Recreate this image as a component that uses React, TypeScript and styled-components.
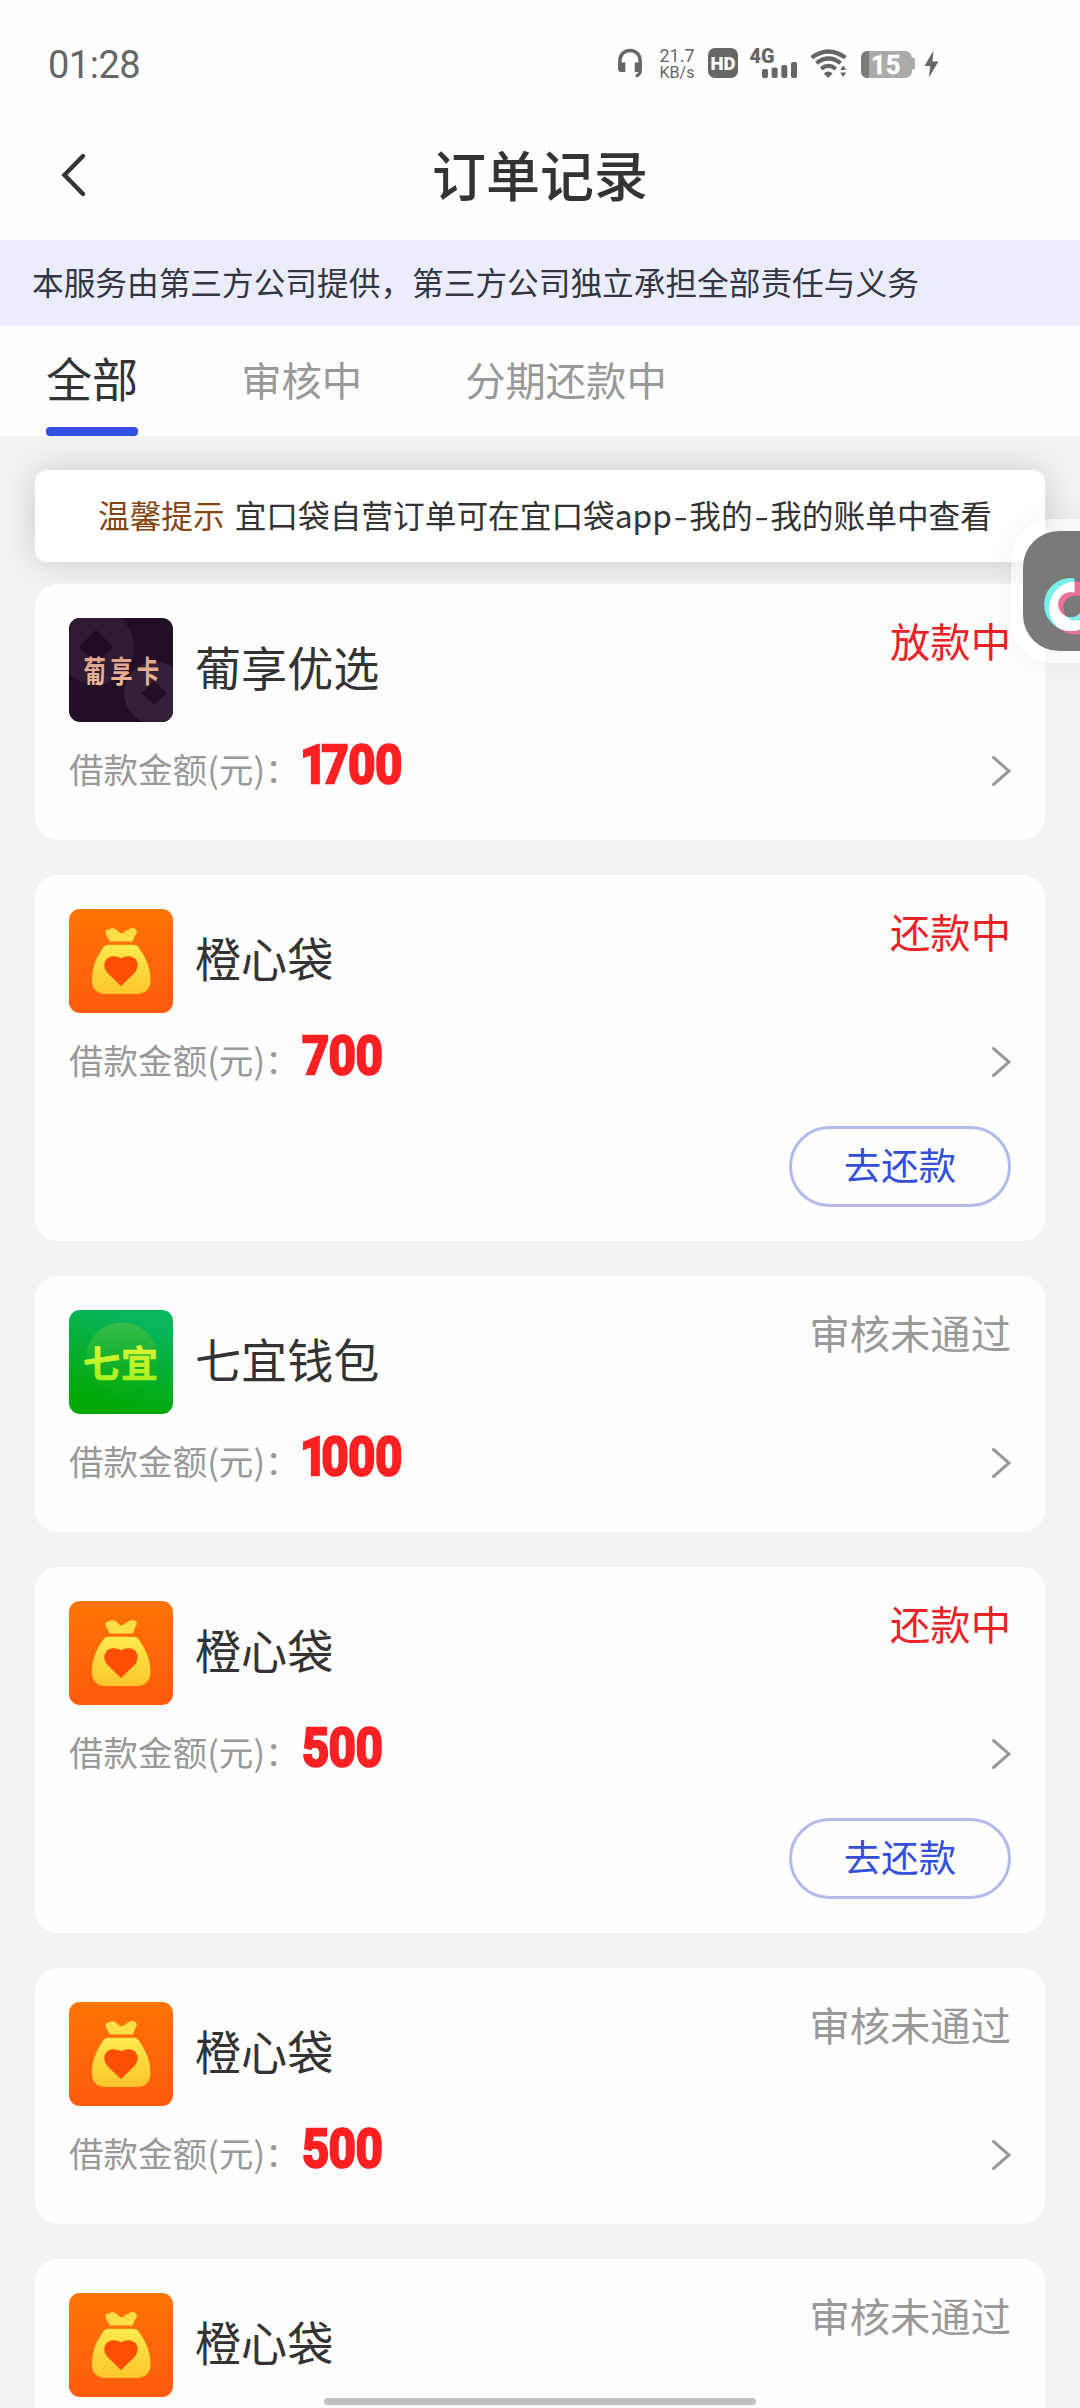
import React from "react";
import styled, { createGlobalStyle } from "styled-components";

const GlobalStyle = createGlobalStyle`
  *, *::before, *::after { box-sizing: border-box; }
  html, body { margin: 0; padding: 0; background: #f3f3f3; overflow: hidden; }
  body {
    font-family: "Noto Sans CJK SC", "Noto Sans", sans-serif;
    color: #333;
    -webkit-font-smoothing: antialiased;
  }
`;

const Screen = styled.div`
  position: relative;
  display: flex;
  flex-direction: column;
  width: 1080px;
  height: 2408px;
  overflow: hidden;
  background: #f3f3f3;
`;

const StatusBar = styled.div`
  flex: none;
  display: flex;
  align-items: center;
  height: 112px;
  padding: 14px 140px 0 48px;
  background: #fefefe;
`;

const Clock = styled.span`
  flex: 1;
  padding-top: 4px;
  font-family: Roboto, "Noto Sans", sans-serif;
  font-size: 38px;
  line-height: 44px;
  letter-spacing: -0.5px;
  color: #666;
`;

const StatusIcons = styled.svg`
  display: block;
  flex: none;
`;

const TitleBar = styled.header`
  flex: none;
  display: grid;
  grid-template-columns: 140px 1fr 140px;
  align-items: center;
  height: 128px;
  background: #fefefe;
`;

const BackButton = styled.button`
  display: flex;
  align-items: center;
  height: 100%;
  padding: 0 0 3px 58px;
  border: 0;
  background: none;
`;

const Title = styled.h1`
  margin: 0;
  padding-bottom: 4px;
  text-align: center;
  font-size: 54px;
  line-height: 80px;
  font-weight: 500;
  color: #333;
`;

const ServiceNotice = styled.div`
  flex: none;
  display: flex;
  align-items: center;
  height: 86px;
  padding: 0 31px 4px 32px;
  background: #ebedfd;
  font-size: 31.68px;
  line-height: 46px;
  color: #333642;
`;

const Tabs = styled.nav`
  flex: none;
  display: flex;
  gap: 103px;
  height: 110px;
  padding-left: 46px;
  background: #fefefe;
`;

const Tab = styled.div<{ $active?: boolean }>`
  display: flex;
  flex-direction: column;
  justify-content: space-between;
  font-size: ${(p) => (p.$active ? 46.08 : 40.32)}px;
  line-height: ${(p) => (p.$active ? 103 : 106)}px;
  color: ${(p) => (p.$active ? "#333" : "#999")};
  white-space: nowrap;
`;

const TabLabel = styled.span`
  height: 101px;
`;

const TabLine = styled.span`
  height: 9px;
  border-radius: 4px;
  background: #3450e4;
`;

const Content = styled.main`
  flex: 1;
  min-height: 0;
  padding: 34px 35px 0;
  overflow: hidden;
`;

const Tip = styled.div`
  display: flex;
  align-items: center;
  gap: 10px;
  height: 92px;
  padding: 0 0 4px 63px;
  border-radius: 12px;
  background: #fff;
  box-shadow: 0 0 34px rgba(0, 0, 0, 0.17);
  font-size: 31.68px;
  line-height: 46px;
  white-space: nowrap;
`;

const TipTag = styled.span`
  color: #844510;
`;

const Dash = styled.span`
  display: inline-block;
  width: 17.5px;
  text-align: center;
  transform: scaleX(1.3);
`;

const Orders = styled.div`
  position: relative;
  display: flex;
  flex-direction: column;
  gap: 35px;
  margin-top: 22px;
`;

const Card = styled.article`
  display: flex;
  flex-direction: column;
  padding: 34px;
  border-radius: 23px;
  background: #fefefe;
`;

const CardHead = styled.div`
  display: flex;
  height: 104px;
`;

const LogoBox = styled.svg`
  display: block;
  flex: none;
  width: 104px;
  height: 104px;
  border-radius: 11px;
`;

const Name = styled.h2`
  flex: 1;
  margin: 0 0 0 22px;
  font-size: 46.08px;
  font-weight: 400;
  line-height: 96px;
  color: #333;
`;

const Status = styled.span<{ $muted: boolean }>`
  height: 46px;
  font-size: 40.32px;
  line-height: 43px;
  color: ${(p) => (p.$muted ? "#999" : "#ec2227")};
`;

const AmountRow = styled.div`
  display: flex;
  align-items: center;
  height: 66px;
  margin: 14px 0 4px;
`;

const AmountLabel = styled.span`
  padding-bottom: 3px;
  font-size: 34.56px;
  line-height: 50px;
  color: #999;
`;

const Amount = styled.span`
  flex: 1;
  padding: 0 0 8px 2px;
`;

const AmountDigits = styled.span`
  display: inline-block;
  font-family: Roboto, "Noto Sans", sans-serif;
  font-size: 53.5px;
  line-height: 58px;
  font-weight: 700;
  color: #fd2023;
  -webkit-text-stroke: 2.6px #fd2023;
  transform: scaleX(0.88);
  transform-origin: left center;
`;

const Digit = styled.span<{ $narrow: boolean }>`
  margin-left: ${(p) => (p.$narrow ? -2 : 0)}px;
  letter-spacing: ${(p) => (p.$narrow ? -6.6 : -0.2)}px;
`;

const Chevron = styled.svg`
  display: block;
  flex: none;
  width: 20px;
  height: 32px;
  margin-top: 3px;
`;

const Actions = styled.div`
  display: flex;
  justify-content: flex-end;
  margin-top: 29px;
`;

const RepayButton = styled.button`
  width: 222px;
  height: 81px;
  padding: 0 0 6px;
  border: 3px solid #b2bbec;
  border-radius: 41px;
  background: transparent;
  font-family: inherit;
  font-size: 37.44px;
  line-height: 54px;
  color: #344fd8;
`;

const FloatingWindow = styled.div`
  position: absolute;
  top: 519px;
  right: -60px;
  display: flex;
  width: 129px;
  height: 144px;
  padding: 12px;
  border-radius: 42px;
  background: rgba(255, 255, 255, 0.55);
  box-shadow: 0 0 30px rgba(0, 0, 0, 0.05);
`;

const FloatingTile = styled.div`
  flex: 1;
  border-radius: 36px;
  overflow: hidden;
  background: rgba(100, 100, 100, 0.86);
`;

const HomeIndicator = styled.div`
  position: absolute;
  left: 324px;
  bottom: 3px;
  width: 432px;
  height: 7px;
  border-radius: 4px;
  background: #c0c0c0;
`;

type Brand = "puxiang" | "orange" | "qiyi";

interface Order {
  brand: Brand;
  name: string;
  amount: string;
  status: string;
  repay?: boolean;
}

const orders: Order[] = [
  { brand: "puxiang", name: "葡享优选", amount: "1700", status: "放款中" },
  { brand: "orange", name: "橙心袋", amount: "700", status: "还款中", repay: true },
  { brand: "qiyi", name: "七宜钱包", amount: "1000", status: "审核未通过" },
  { brand: "orange", name: "橙心袋", amount: "500", status: "还款中", repay: true },
  { brand: "orange", name: "橙心袋", amount: "500", status: "审核未通过" },
  { brand: "orange", name: "橙心袋", amount: "500", status: "审核未通过" },
];

function PuxiangLogo() {
  return (
    <LogoBox viewBox="0 0 104 104">
      <defs>
        <linearGradient id="px-text" x1="0" y1="0" x2="0" y2="1">
          <stop offset="0" stopColor="#d99c84" />
          <stop offset="1" stopColor="#efbd9f" />
        </linearGradient>
      </defs>
      <rect width="104" height="104" fill="#220f26" />
      <circle cx="27" cy="29" r="38" fill="#2f1b34" />
      <path d="M27 12 L44 29 L27 46 L10 29 Z" fill="#1f0c24" />
      <circle cx="86" cy="75" r="31" fill="#35203a" />
      <path d="M85 63 L98 75 L85 87 L72 75 Z" fill="#220f26" />
      <g transform="translate(14.5 0) scale(0.86 1.14)">
        <text
          x="0"
          y="56.5"
          fill="url(#px-text)"
          fontSize="26"
          fontWeight="700"
          letterSpacing="5"
          fontFamily="'Noto Sans CJK SC', sans-serif"
        >
          葡享卡
        </text>
      </g>
    </LogoBox>
  );
}

function QiyiLogo() {
  return (
    <LogoBox viewBox="0 0 104 104">
      <defs>
        <linearGradient id="qy-bg" x1="0.3" y1="0" x2="0" y2="1">
          <stop offset="0" stopColor="#08b45c" />
          <stop offset="0.75" stopColor="#02a90c" />
          <stop offset="1" stopColor="#02a902" />
        </linearGradient>
        <linearGradient id="qy-disc" x1="0" y1="0" x2="0" y2="1">
          <stop offset="0" stopColor="#38bd4c" />
          <stop offset="1" stopColor="#0aaa0c" stopOpacity="0.3" />
        </linearGradient>
        <linearGradient id="qy-text" x1="0" y1="0" x2="0" y2="1">
          <stop offset="0" stopColor="#f2f53a" />
          <stop offset="1" stopColor="#9bf01a" />
        </linearGradient>
      </defs>
      <rect width="104" height="104" fill="url(#qy-bg)" />
      <circle cx="53" cy="48.5" r="36" fill="url(#qy-disc)" />
      <text
        x="14"
        y="67.5"
        fill="url(#qy-text)"
        stroke="url(#qy-text)"
        strokeWidth="0.6"
        fontSize="37"
        fontWeight="700"
        letterSpacing="1"
        fontFamily="'Noto Sans CJK SC', sans-serif"
      >
        七宜
      </text>
    </LogoBox>
  );
}

function OrangeLogo() {
  return (
    <LogoBox viewBox="0 0 104 104">
      <defs>
        <linearGradient id="or-bg" x1="0" y1="0" x2="0" y2="1">
          <stop offset="0" stopColor="#ff7404" />
          <stop offset="1" stopColor="#ff5b0e" />
        </linearGradient>
        <linearGradient id="or-bag" x1="0" y1="0" x2="0" y2="1">
          <stop offset="0" stopColor="#ffea4c" />
          <stop offset="1" stopColor="#fdc52c" />
        </linearGradient>
      </defs>
      <rect width="104" height="104" fill="url(#or-bg)" />
      <path
        d="M40.5 32 L36.8 25 C35.5 22 37.5 20.4 40 20.6 C42 18.6 46.5 18.8 49 22.5 Q52 25.5 55 23.2 Q57.5 20.5 60 20.2 C63 18 67.5 18.6 68 22.5 Q68 24.4 66.6 25.6 L63.8 32.4 H40.5 Z"
        fill="#ffdf48"
      />
      <path
        d="M39.5 35.8 H64.5 Q68 35.8 70 38.8 Q81.5 55 81.5 70 Q81.5 85 67 85 H37 Q22.8 85 22.8 70 Q22.8 55 34 38.8 Q36 35.8 39.5 35.8 Z"
        fill="url(#or-bag)"
      />
      <path
        d="M52 77 L39 64.5 C33.5 59 34.5 51.5 39.5 48.6 C44 46 49 47.3 52 49.4 C55 47.3 60 46 64.5 48.6 C69.5 51.5 70.5 59 65 64.5 Z"
        fill="#ff4f02"
      />
    </LogoBox>
  );
}

const logos: Record<Brand, () => React.ReactElement> = {
  puxiang: PuxiangLogo,
  orange: OrangeLogo,
  qiyi: QiyiLogo,
};

function ChevronRight() {
  return (
    <Chevron viewBox="0 0 20 32">
      <path d="M2.5 2.5 L18 16 L2.5 29.5" fill="none" stroke="#999" strokeWidth="3" strokeLinecap="round" />
    </Chevron>
  );
}

function OrderCard({ order }: { order: Order }) {
  const Logo = logos[order.brand];
  return (
    <Card>
      <CardHead>
        <Logo />
        <Name>{order.name}</Name>
        <Status $muted={order.status === "审核未通过"}>{order.status}</Status>
      </CardHead>
      <AmountRow>
        <AmountLabel>借款金额(元)：</AmountLabel>
        <Amount>
          <AmountDigits>
            {order.amount.split("").map((d, i) => (
              <Digit key={i} $narrow={d === "1"}>
                {d}
              </Digit>
            ))}
          </AmountDigits>
        </Amount>
        <ChevronRight />
      </AmountRow>
      {order.repay && (
        <Actions>
          <RepayButton>去还款</RepayButton>
        </Actions>
      )}
    </Card>
  );
}

function SystemIcons() {
  return (
    <StatusIcons width="325" height="44" viewBox="0 -5 325 44" fill="#666">
      {/* headset */}
      <path d="M4.9 22 V14.5 A10.1 10.1 0 0 1 25.1 14.5 V22" fill="none" stroke="#666" strokeWidth="3.5" />
      <path d="M3.1 16.5 H10.3 V26 H6 Q3.1 26 3.1 23 Z" />
      <path d="M19.7 16.5 H26.9 V24.5 Q26.9 30.5 20.7 31.5 V28.5 Q23 28 23.2 26 H19.7 Z" />
      {/* network speed */}
      <g fontFamily="Roboto, 'Noto Sans', sans-serif" fontSize="18">
        <text x="44.5" y="15.8" textLength="35" lengthAdjust="spacingAndGlyphs">21.7</text>
        <text x="44.5" y="31.8" fontSize="17" textLength="35" lengthAdjust="spacingAndGlyphs">KB/s</text>
      </g>
      {/* HD */}
      <rect x="93" y="2" width="30" height="30" rx="7" />
      <text x="95.4" y="23.6" fill="#fff" fontFamily="Roboto, 'Noto Sans', sans-serif" fontWeight="900" fontSize="18.5" textLength="25" lengthAdjust="spacingAndGlyphs">HD</text>
      {/* signal */}
      <text x="134.6" y="16.8" fontFamily="Roboto, 'Noto Sans', sans-serif" fontWeight="900" fontSize="20.5" textLength="25" lengthAdjust="spacingAndGlyphs">4G</text>
      <rect x="147" y="23" width="6" height="9" rx="2" />
      <rect x="156.6" y="21.6" width="6" height="10.4" rx="2" />
      <rect x="166.3" y="19" width="6" height="13" rx="2" />
      <rect x="176" y="16" width="6" height="16" rx="2" />
      {/* wifi */}
      <g fill="none" stroke="#666" strokeWidth="4.2">
        <path d="M196.6 11.6 Q213.5 -0.6 230.4 11.6" />
        <path d="M201.4 17.2 Q213.5 7.8 225.6 17.2" />
        <path d="M206.2 22.8 Q213.5 17 220.8 22.8" />
      </g>
      <path d="M208.8 27.4 Q213.2 23.8 217.6 27.4 L213.2 32 Z" />
      <path d="M225.2 24 L228.2 19.4 L231.2 24 Z M225.2 26.4 H231.2 L228.2 31 Z" />
      {/* battery */}
      <path d="M296 11.5 H297.5 Q300 11.5 300 14 V21 Q300 23.6 297.5 23.6 H296 Z" fill="#aaa" />
      <rect x="246" y="5" width="51" height="27" rx="7" fill="#aaa" />
      <path d="M254 5 H253 Q246 5 246 12 V25 Q246 32 253 32 H254 Z" fill="#7a7a7a" />
      <text x="256" y="28" fill="#fff" stroke="#fff" strokeWidth="0.5" fontFamily="Roboto, 'Noto Sans', sans-serif" fontWeight="700" fontSize="25.5" textLength="29.5" lengthAdjust="spacingAndGlyphs">15</text>
      {/* charging */}
      <path d="M318.5 4.5 L309.5 20 H315.3 L313.8 31.5 L323.5 15.6 H317.4 Z" />
    </StatusIcons>
  );
}

function DouyinTile() {
  return (
    <svg width="57" height="120" viewBox="0 0 57 120">
      <defs>
        <mask id="dy-cyan" maskUnits="userSpaceOnUse" x="0" y="0" width="57" height="120">
          <circle cx="47.7" cy="73.5" r="19.6" fill="none" stroke="#fff" strokeWidth="14" />
          <rect x="51.4" y="40" width="20" height="26" fill="#000" />
        </mask>
      </defs>
      <circle cx="52.8" cy="77" r="19.6" fill="none" stroke="#ee6f98" strokeWidth="14" />
      <rect width="57" height="120" fill="#7af0ea" mask="url(#dy-cyan)" />
      <g mask="url(#dy-cyan)">
        <circle cx="52.8" cy="77" r="19.6" fill="none" stroke="#fff" strokeWidth="14" />
      </g>
    </svg>
  );
}

export default function App() {
  return (
    <Screen>
      <GlobalStyle />
      <StatusBar>
        <Clock>01:28</Clock>
        <SystemIcons />
      </StatusBar>
      <TitleBar>
        <BackButton aria-label="返回">
          <svg width="30" height="46" viewBox="0 0 30 46">
            <path d="M25 4 L6.5 23 L25 42" fill="none" stroke="#333" strokeWidth="4.4" strokeLinecap="round" />
          </svg>
        </BackButton>
        <Title>订单记录</Title>
      </TitleBar>
      <ServiceNotice>本服务由第三方公司提供，第三方公司独立承担全部责任与义务</ServiceNotice>
      <Tabs>
        <Tab $active>
          <TabLabel>全部</TabLabel>
          <TabLine />
        </Tab>
        <Tab>审核中</Tab>
        <Tab>分期还款中</Tab>
      </Tabs>
      <Content>
        <Tip>
          <TipTag>温馨提示</TipTag>
          <span>
            宜口袋自营订单可在宜口袋app<Dash>-</Dash>我的<Dash>-</Dash>我的账单中查看
          </span>
        </Tip>
        <Orders>
          {orders.map((o, i) => (
            <OrderCard key={i} order={o} />
          ))}
        </Orders>
      </Content>
      <FloatingWindow>
        <FloatingTile>
          <DouyinTile />
        </FloatingTile>
      </FloatingWindow>
      <HomeIndicator />
    </Screen>
  );
}
